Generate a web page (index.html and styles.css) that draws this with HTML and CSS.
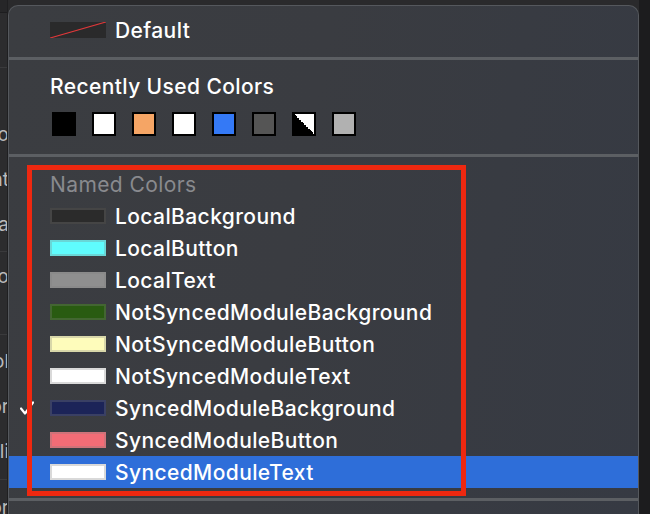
FILE: index.html
```html
<!DOCTYPE html>
<html lang="en">
<head>
    <meta charset="UTF-8" />
    <title>Color menu</title>
    <link rel="stylesheet" href="styles.css">
</head>
<body>

    <div class="side">
        <div class="side-top"></div>
        <div class="side-block b1"></div>
        <div class="side-block b2">
            <div class="frag"><span>Fo</span></div>
            <div class="frag"><span>nt</span></div>
            <div class="frag"><span>Ta</span></div>
        </div>
        <div class="side-block b3">
            <div class="frag"><span>Fo</span></div>
        </div>
        <div class="side-block b4">
            <div class="frag"><span>ol</span></div>
            <div class="frag"><span>or</span></div>
            <div class="frag"><span>li</span></div>
        </div>
        <div class="side-block b5">
            <div class="frag"><span>or</span></div>
        </div>
    </div>

    <div class="menu">
        <div class="row default-row">
            <span class="check"></span>
            <svg class="swatch-default" width="56" height="16" viewBox="0 0 56 16">
                <rect width="56" height="16" fill="#2a2a2b" />
                <line x1="0" y1="16" x2="56" y2="0" stroke="#e0383a" stroke-width="1.2" />
            </svg>
            <span class="label">Default</span>
        </div>

        <div class="sep"></div>

        <div class="recent">
            <div class="title">Recently Used Colors</div>
            <div class="chips">
                <span class="chip" style="background:#000"></span>
                <span class="chip" style="background:#fff"></span>
                <span class="chip" style="background:#f5a565"></span>
                <span class="chip" style="background:#fff"></span>
                <span class="chip" style="background:#3479f6"></span>
                <span class="chip" style="background:#555"></span>
                <span class="chip half"></span>
                <span class="chip" style="background:#b1b1b1"></span>
            </div>
        </div>

        <div class="sep"></div>

        <div class="named">
            <div class="row header">
                <span class="check"></span>
                <span class="label">Named Colors</span>
            </div>
            <div class="row">
                <span class="check"></span>
                <span class="swatch" style="background:#2b2b2b"></span>
                <span class="label">LocalBackground</span>
            </div>
            <div class="row">
                <span class="check"></span>
                <span class="swatch" style="background:#5ffcfd"></span>
                <span class="label">LocalButton</span>
            </div>
            <div class="row">
                <span class="check"></span>
                <span class="swatch" style="background:#8f8f8f"></span>
                <span class="label">LocalText</span>
            </div>
            <div class="row">
                <span class="check"></span>
                <span class="swatch" style="background:#295b11"></span>
                <span class="label">NotSyncedModuleBackground</span>
            </div>
            <div class="row">
                <span class="check"></span>
                <span class="swatch" style="background:#fefcbb"></span>
                <span class="label">NotSyncedModuleButton</span>
            </div>
            <div class="row">
                <span class="check"></span>
                <span class="swatch" style="background:#ffffff"></span>
                <span class="label">NotSyncedModuleText</span>
            </div>
            <div class="row">
                <span class="check">
                    <svg width="14" height="14" viewBox="0 0 14 14">
                        <path d="M1 7.5 L5 12.5 L13 1.5" fill="none" stroke="#fff" stroke-width="2.2" stroke-linecap="round" stroke-linejoin="round" />
                    </svg>
                </span>
                <span class="swatch" style="background:#1c2458"></span>
                <span class="label">SyncedModuleBackground</span>
            </div>
            <div class="row">
                <span class="check"></span>
                <span class="swatch" style="background:#f36c76"></span>
                <span class="label">SyncedModuleButton</span>
            </div>
            <div class="row active">
                <span class="check"></span>
                <span class="swatch" style="background:#ffffff"></span>
                <span class="label">SyncedModuleText</span>
            </div>
        </div>

        <div class="sep bottom-sep"></div>
    </div>

    <div class="gutter"></div>

    <div class="annotation"></div>

</body>
</html>
```

FILE: styles.css
```css
* {
    box-sizing: border-box;
}

body {
    margin: 0;
    width: 650px;
    height: 514px;
    overflow: hidden;
    display: flex;
    position: relative;
    background: #2a2a2c;
    font-family: Inter, 'Liberation Sans', sans-serif;
    font-size: 21px;
    color: #fff;
}

/* clipped inspector behind the menu */
.side {
    width: 8px;
    flex-shrink: 0;
    overflow: hidden;
    background: #2c2c2e;
    border-right: 1px solid #1f1f21;
    color: #b9b9bb;
    font-size: 19px;
}

.side-top {
    height: 13px;
    background: #262628;
    border-bottom: 1px solid #1d1d1f;
}

.side-block {
    border-bottom: 1px solid #3a3a3c;
}

.frag {
    height: 45px;
    display: flex;
    justify-content: flex-end;
    align-items: center;
    white-space: nowrap;
}

.frag span {
    flex-shrink: 0;
    margin-right: -2px;
}

.b1 { height: 55px; }
.b2 { height: 184px; padding-top: 44px; }
.b3 { height: 83px; padding-top: 2px; }
.b4 { height: 145px; padding-top: 4px; }
.b5 { height: 40px; padding-top: 5px; border-bottom: none; }

.menu {
    width: 631px;
    flex-shrink: 0;
    margin-top: 5px;
    border: 1px solid #55585d;
    border-bottom: none;
    border-radius: 10px 10px 0 0;
    background: linear-gradient(100deg, #3b3d41 0%, #3a3c41 45%, #363a43 100%);
}

.gutter {
    flex: 1;
    background: #1c1c1e;
}

.row {
    height: 32px;
    display: flex;
    align-items: center;
    padding-left: 11px;
}

.check {
    width: 30px;
    height: 14px;
    display: flex;
    align-items: center;
    flex-shrink: 0;
}

.default-row {
    height: 51px;
    padding-bottom: 3px;
}

.label {
    margin-left: 9px;
    font-weight: 500;
    letter-spacing: 0.4px;
}

.sep {
    height: 3px;
    background: #5c5f63;
}

.recent {
    height: 94px;
    padding: 15px 0 0 41px;
}

.title {
    line-height: 24px;
    font-weight: 500;
    letter-spacing: 0.4px;
}

.chips {
    display: flex;
    gap: 16px;
    margin-top: 13px;
    padding-left: 2px;
}

.chip {
    width: 24px;
    height: 24px;
    border: 2px solid #000;
}

.chip.half {
    background: linear-gradient(to top right, #000 50%, #fff 50%);
}

.named {
    padding-top: 11px;
    padding-bottom: 10px;
}

.header .label {
    margin-left: 0;
    color: #898a8e;
    font-weight: 400;
}

.swatch {
    width: 56px;
    height: 16px;
    flex-shrink: 0;
    box-shadow: inset 0 0 0 2px rgba(128, 128, 128, 0.3);
}

.row.active {
    background: #2e6ed9;
}

.annotation {
    position: absolute;
    left: 27px;
    top: 165px;
    width: 439px;
    height: 331px;
    border: 5px solid #ee2810;
}
```
